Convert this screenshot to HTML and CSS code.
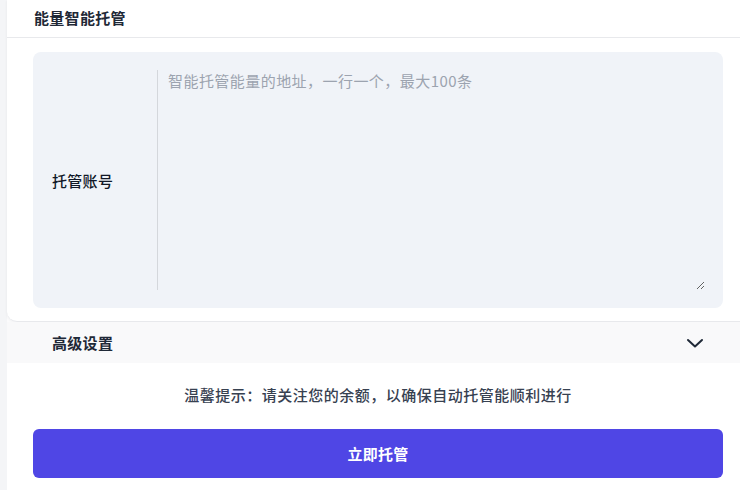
FILE: index.html
```html
<!DOCTYPE html>
<html lang="zh">
<head>
<meta charset="utf-8">
<link rel="stylesheet" href="styles.css">
</head>
<body>
<div class="page">
  <div class="gutter"></div>
  <main class="main">
    <section class="card">
      <header class="card-head">能量智能托管</header>
      <div class="card-body">
        <div class="field">
          <label class="field-label" for="acc">托管账号</label>
          <textarea id="acc" class="field-input" placeholder="智能托管能量的地址，一行一个，最大100条"></textarea>
        </div>
      </div>
    </section>
    <div class="advanced">
      <span class="advanced-title">高级设置</span>
      <svg class="chevron" width="18" height="18" viewBox="0 0 18 18" fill="none" stroke="#1f2937" stroke-width="2" stroke-linecap="round" stroke-linejoin="round"><polyline points="2,6 9,12.5 16,6"/></svg>
    </div>
    <p class="tip">温馨提示：请关注您的余额，以确保自动托管能顺利进行</p>
    <div class="actions">
      <button class="submit">立即托管</button>
    </div>
  </main>
</div>
</body>
</html>
```

FILE: styles.css
```css
* { box-sizing: border-box; }
html, body { margin: 0; padding: 0; }
body {
  font-family: "Noto Sans CJK SC", "Noto Sans", "Liberation Sans", sans-serif;
  background: #ffffff;
  color: #1f2937;
  width: 740px;
  height: 490px;
  overflow: hidden;
}
.page {
  display: flex;
  height: 490px;
}
.gutter {
  width: 7px;
  flex: none;
  background: #f4f5f7;
}
.main {
  flex: 1;
  display: flex;
  flex-direction: column;
  background: #fbfbfc;
}
.card {
  background: #ffffff;
  border-bottom: 1px solid #e8e9ec;
  border-bottom-left-radius: 10px;
  box-shadow: -1px 1px 2px rgba(0,0,0,0.03);
}
.card-head {
  height: 38px;
  padding-left: 27px;
  display: flex;
  align-items: center;
  font-size: 15px;
  font-weight: 700;
  letter-spacing: 0.3px;
  color: #1f2937;
  border-bottom: 1px solid #e8e9ec;
  padding-bottom: 2px;
}
.card-body {
  padding: 14px 17px 13px 26px;
}
.field {
  display: flex;
  align-items: center;
  height: 256px;
  background: #f0f3f8;
  border-radius: 8px;
  padding: 18px 18px 18px 19px;
}
.field-label {
  width: 105px;
  flex: none;
  font-size: 15px;
  font-weight: 500;
  letter-spacing: 0.3px;
  color: #111827;
}
.field-input {
  flex: 1;
  align-self: stretch;
  border: none;
  border-left: 1px solid #d4d7dc;
  background: transparent;
  padding: 0 10px;
  font-family: inherit;
  font-size: 15px;
  line-height: 22px;
  letter-spacing: 0.45px;
  color: #111827;
  outline: none;
  resize: vertical;
}
.field-input::placeholder {
  color: #9ca3af;
}
.advanced {
  height: 41px;
  display: flex;
  align-items: center;
  justify-content: space-between;
  padding: 0 36px 0 45px;
  background: #f9f9fa;
}
.advanced-title {
  font-size: 15px;
  font-weight: 700;
  letter-spacing: 0.3px;
  color: #1f2937;
}
.chevron { display: block; }
.tip {
  margin: 0;
  background: #ffffff;
  padding: 21px 0 0 9px;
  height: 66px;
  text-align: center;
  font-size: 15px;
  font-weight: 500;
  letter-spacing: 0.5px;
  color: #374151;
}
.actions {
  flex: 1;
  background: #ffffff;
  padding: 0 17px 0 26px;
}
.submit {
  width: 100%;
  height: 49px;
  border: none;
  border-radius: 6px;
  background: #4f46e5;
  color: #ffffff;
  font-family: inherit;
  font-size: 15px;
  font-weight: 700;
  letter-spacing: 0.3px;
  cursor: pointer;
}
```
